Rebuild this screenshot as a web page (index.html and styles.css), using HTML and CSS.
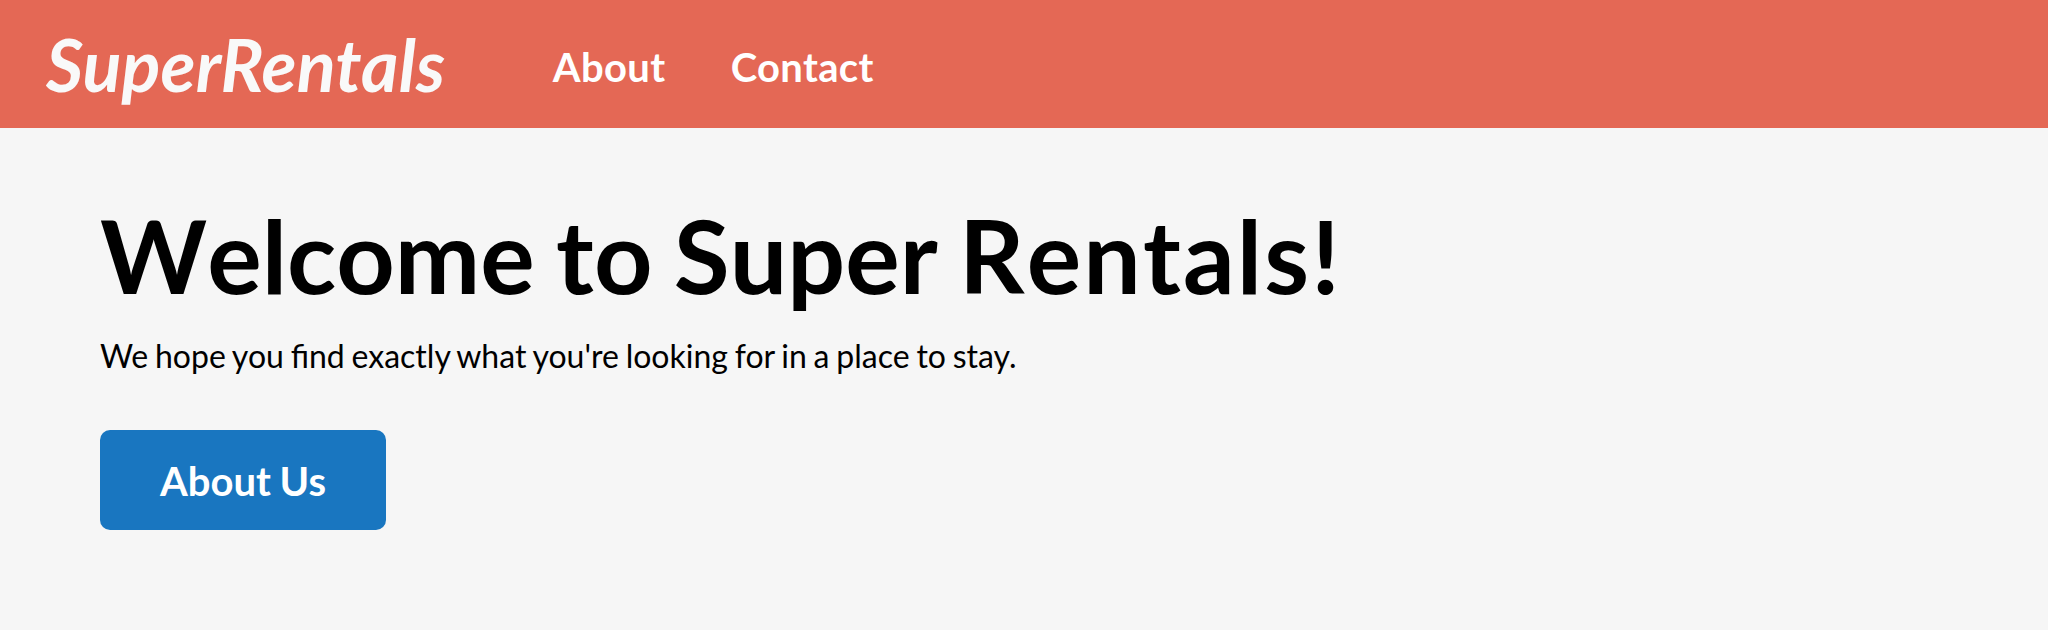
FILE: index.html
```html
<!DOCTYPE html>
<html lang="en">
<head>
<meta charset="utf-8">
<title>SuperRentals</title>
<link rel="stylesheet" href="styles.css">
</head>
<body>
<nav class="menu">
  <a class="brand" href="#"><h1 class="brand-name">SuperRentals</h1></a>
  <div class="links">
    <a class="link" href="#">About</a>
    <a class="link" href="#">Contact</a>
  </div>
</nav>
<main class="jumbo">
  <h2 class="title">Welcome to Super <span class="title-end">Rentals!</span></h2>
  <p class="lead">We hope you find exactly what you're looking for in a place to stay.</p>
  <a class="button" href="#">About Us</a>
</main>
</body>
</html>
```
FILE: styles.css
```css
* {
  box-sizing: border-box;
  margin: 0;
  padding: 0;
}

body {
  min-height: 630px;
  background: #f6f6f6;
  color: #000;
  font-family: Lato, sans-serif;
}

a {
  color: inherit;
  text-decoration: none;
}

.menu {
  display: flex;
  align-items: center;
  height: 128px;
  padding-left: 46px;
  background: #e46855;
  color: #fff;
}

.brand-name {
  color: #f9f9f9;
  font-size: 72px;
  font-style: italic;
  font-weight: 700;
  letter-spacing: 0.1px;
  line-height: 88px;
}

.links {
  display: flex;
  gap: 65.2px;
  margin-left: 107.6px;
  padding-top: 6px;
}

.link {
  font-size: 40px;
  font-weight: 700;
  letter-spacing: 0.35px;
  line-height: 48px;
}

.jumbo {
  padding: 75px 100px;
}

.title {
  font-size: 102px;
  font-kerning: none;
  font-weight: 700;
  line-height: 104px;
  word-spacing: -3.5px;
}

.title-end {
  letter-spacing: 2.1px;
}

.lead {
  margin-top: 25px;
  font-size: 32px;
  line-height: 48px;
  word-spacing: -1.4px;
}

.button {
  display: inline-block;
  height: 100px;
  margin-top: 50px;
  padding: 0 60px;
  border-radius: 10px;
  background: #1976c0;
  color: #fff;
  font-size: 40px;
  font-weight: 700;
  line-height: 102px;
  word-spacing: -1px;
}
```
